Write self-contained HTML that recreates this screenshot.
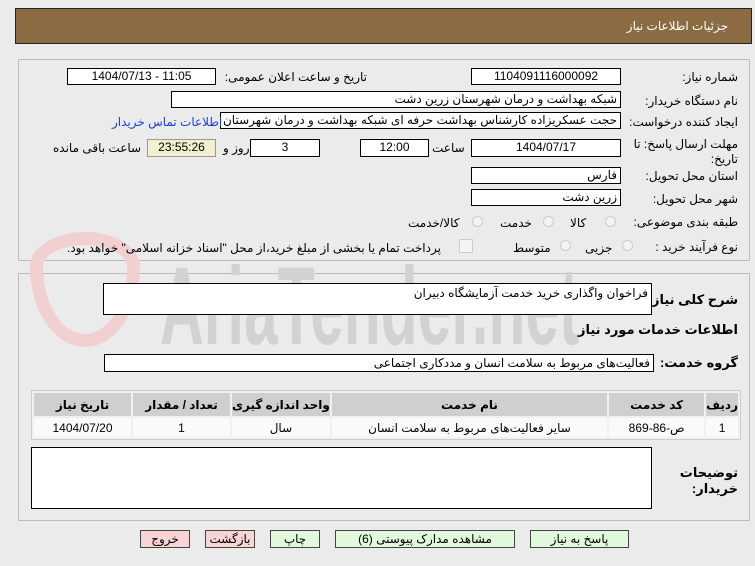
<!DOCTYPE html>
<html><head><meta charset="utf-8"><style>
body{margin:0;width:755px;height:566px;background:#ebebeb;font-family:"Liberation Sans","DejaVu Sans",sans-serif;font-size:12px;color:#000;position:relative;overflow:hidden}
.a{position:absolute;white-space:nowrap}
.b{position:absolute;background:#fff;border:1px solid #000;box-sizing:border-box;font-size:12px;line-height:15px;direction:rtl;padding:0 3px;white-space:nowrap;overflow:hidden}
.c{text-align:center;direction:ltr}
.l{position:absolute;direction:rtl;text-align:right;white-space:nowrap;font-size:12px}
.r{position:absolute;width:11px;height:11px;border-radius:50%;border:1px solid #ccc;background:#f4f4f4;box-sizing:border-box}
.btn{position:absolute;top:530px;height:18px;border:1px solid #444;box-sizing:border-box;text-align:center;line-height:16px;font-size:12px}
table{position:absolute;left:31px;top:390px;width:710px;border-collapse:separate;border-spacing:2px;background:#f0f0f0;border:1px solid #ccc}
th{background:#cfcfcf;height:23px;font-size:12px;font-weight:bold;white-space:nowrap;padding:0}
td{background:#fafafa;height:19px;text-align:center;font-size:12px;padding:0}
</style></head><body>
<div class="a" style="left:15px;top:8px;width:737px;height:36px;background:#8b6b41;border:1px solid #222;box-sizing:border-box"></div>
<div class="l" style="right:27px;top:19px;color:#fff;font-size:12px">جزئیات اطلاعات نیاز</div>
<div class="a" style="left:18px;top:59px;width:732px;height:202px;border:1px solid #bbb;box-sizing:border-box"></div>
<div class="a" style="left:18px;top:273px;width:732px;height:248px;border:1px solid #bbb;box-sizing:border-box"></div>
<div class="a" style="left:160px;top:252px;font-size:110px;line-height:110px;font-weight:bold;color:#d2d2d2;transform:scaleX(0.55);transform-origin:0 0;font-family:'Liberation Sans',sans-serif">AriaTender.net</div>
<div class="a" style="left:30px;top:232px;width:110px;height:115px;border:13px solid #f0d0d0;border-radius:50% 50% 50% 50%/30% 30% 70% 70%;box-sizing:border-box"></div>

<div class="l" style="right:17px;top:70px">شماره نیاز:</div>
<div class="b c" style="left:471px;top:68px;width:150px;height:17px">1104091116000092</div>
<div class="l" style="right:388px;top:70px">تاریخ و ساعت اعلان عمومی:</div>
<div class="b c" style="left:67px;top:68px;width:149px;height:17px">1404/07/13 - 11:05</div>
<div class="l" style="right:17px;top:94px">نام دستگاه خریدار:</div>
<div class="b" style="left:171px;top:91px;width:450px;height:17px">شبکه بهداشت و درمان شهرستان زرین دشت</div>
<div class="l" style="right:17px;top:115px">ایجاد کننده درخواست:</div>
<div class="b" style="left:220px;top:112px;width:401px;height:17px">حجت عسکریزاده کارشناس بهداشت حرفه ای شبکه بهداشت و درمان شهرستان زرین دشت</div>
<div class="l" style="left:112px;top:115px;color:#1a3fd8">اطلاعات تماس خریدار</div>
<div class="l" style="right:17px;top:137px;line-height:15px;text-align:right">مهلت ارسال پاسخ: تا<br>تاریخ:</div>
<div class="b c" style="left:471px;top:139px;width:150px;height:18px">1404/07/17</div>
<div class="l" style="left:432px;top:141px">ساعت</div>
<div class="b c" style="left:360px;top:139px;width:69px;height:18px">12:00</div>
<div class="b c" style="left:250px;top:139px;width:70px;height:18px">3</div>
<div class="l" style="left:223px;top:141px">روز و</div>
<div class="b c" style="left:147px;top:139px;width:69px;height:18px;background:#f3f0cf;border-color:#999">23:55:26</div>
<div class="l" style="left:53px;top:141px">ساعت باقی مانده</div>
<div class="l" style="right:17px;top:169px">استان محل تحویل:</div>
<div class="b" style="left:471px;top:167px;width:150px;height:17px">فارس</div>
<div class="l" style="right:17px;top:192px">شهر محل تحویل:</div>
<div class="b" style="left:471px;top:189px;width:150px;height:17px">زرین دشت</div>
<div class="l" style="right:17px;top:215px">طبقه بندی موضوعی:</div>
<div class="r" style="left:605px;top:216px"></div><div class="l" style="left:570px;top:216px">کالا</div>
<div class="r" style="left:543px;top:216px"></div><div class="l" style="left:500px;top:216px">خدمت</div>
<div class="r" style="left:472px;top:216px"></div><div class="l" style="left:408px;top:216px">کالا/خدمت</div>
<div class="l" style="right:17px;top:240px">نوع فرآیند خرید :</div>
<div class="r" style="left:622px;top:240px"></div><div class="l" style="left:585px;top:241px">جزیی</div>
<div class="r" style="left:560px;top:240px"></div><div class="l" style="left:513px;top:241px">متوسط</div>
<div class="a" style="left:459px;top:239px;width:12px;height:12px;border:1px solid #ccc;background:#f4f4f4"></div>
<div class="l" style="left:67px;top:241px">پرداخت تمام یا بخشی از مبلغ خرید،از محل "اسناد خزانه اسلامی" خواهد بود.</div>

<div class="l" style="right:17px;top:292px;font-weight:bold;font-size:13px">شرح کلی نیاز:</div>
<div class="b" style="left:103px;top:283px;width:549px;height:32px;padding-top:2px">فراخوان واگذاری خرید خدمت آزمایشگاه دبیران</div>
<div class="l" style="right:17px;top:322px;font-weight:bold;font-size:13px">اطلاعات خدمات مورد نیاز</div>
<div class="l" style="right:17px;top:355px;font-weight:bold;font-size:13px">گروه خدمت:</div>
<div class="b" style="left:104px;top:354px;width:550px;height:18px;padding-top:1px">فعالیت‌های مربوط به سلامت انسان و مددکاری اجتماعی</div>
<table dir="rtl"><tr><th style="width:30px">ردیف</th><th style="width:95px">کد خدمت</th><th>نام خدمت</th><th style="width:97px">واحد اندازه گیری</th><th style="width:97px">تعداد / مقدار</th><th style="width:97px">تاریخ نیاز</th></tr>
<tr><td>1</td><td>ص-86-869</td><td>سایر فعالیت‌های مربوط به سلامت انسان</td><td>سال</td><td>1</td><td>1404/07/20</td></tr></table>
<div class="b" style="left:31px;top:447px;width:621px;height:62px"></div>
<div class="l" style="right:17px;top:465px;font-weight:bold;font-size:13px;line-height:16px">توضیحات<br>خریدار:</div>

<div class="btn" style="left:140px;width:50px;background:#f8d4d4">خروج</div>
<div class="btn" style="left:205px;width:50px;background:#f8d4d4">بازگشت</div>
<div class="btn" style="left:270px;width:50px;background:#e2f8dc">چاپ</div>
<div class="btn" style="left:335px;width:180px;background:#e2f8dc">مشاهده مدارک پیوستی (6)</div>
<div class="btn" style="left:530px;width:99px;background:#e2f8dc">پاسخ به نیاز</div>
</body></html>
